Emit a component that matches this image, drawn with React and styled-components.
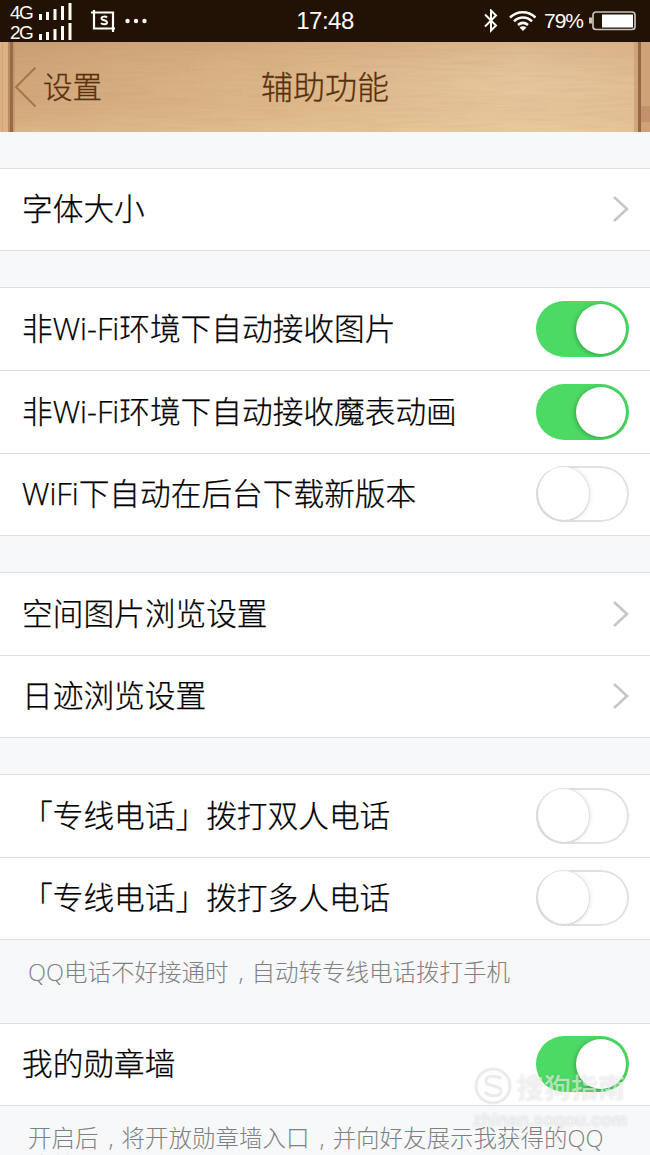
import React from "react";
import styled, { createGlobalStyle } from "styled-components";

const Global = createGlobalStyle`
  body { margin: 0; background: #f7f8fa; }
  * { box-sizing: border-box; }
`;

const Screen = styled.main`
  width: 650px;
  height: 1155px;
  overflow: hidden;
  position: relative;
  background: #f7f8fa;
  font-family: "Open Sans", "Noto Sans CJK SC", sans-serif;
  font-weight: 300;
`;

const StatusBar = styled.header`
  height: 42px;
  display: grid;
  grid-template-columns: 1fr auto 1fr;
  align-items: center;
  background: #221206;
  color: #fffdf5;
  font-family: "Liberation Sans", sans-serif;
  font-weight: 400;
`;

const StatusGroup = styled.div`
  display: flex;
  align-items: center;
  justify-content: ${(p) => (p.$end ? "flex-end" : "flex-start")};
  padding: ${(p) => (p.$end ? "0 14px 0 0" : "0 0 0 10px")};
`;

const Networks = styled.div`
  display: grid;
  gap: 1px;
  margin-right: 19px;
  padding-top: 2px;
`;

const Network = styled.div`
  display: flex;
  align-items: flex-start;
  justify-content: space-between;
  width: 62px;
  height: 19px;
  font-size: 19px;
  line-height: 20px;
  letter-spacing: -1.5px;
`;

const Clock = styled.time`
  font-size: 24px;
  line-height: 42px;
  letter-spacing: -0.5px;
`;

const Percent = styled.span`
  font-size: 21px;
  line-height: 42px;
  letter-spacing: -1px;
  margin: 0 6px 0 8px;
`;

const NavBar = styled.nav`
  position: relative;
  height: 90px;
  display: grid;
  grid-template-columns: 1fr auto 1fr;
  align-items: center;
  background: #dbb487;
  color: #57300f;
`;

const Wood = styled.svg`
  position: absolute;
  inset: 0;
  display: block;
`;

const Back = styled.div`
  position: relative;
  display: flex;
  align-items: center;
  gap: 6px;
  padding-left: 14px;
  font-size: 29.5px;
  line-height: 90px;
  -webkit-text-stroke: 0.3px currentColor;
`;

const Title = styled.h1`
  position: relative;
  margin: 0;
  font-size: 32px;
  font-weight: 300;
  line-height: 88px;
  padding-bottom: 1px;
  -webkit-text-stroke: 0.3px currentColor;
`;

const Group = styled.section`
  margin-top: ${(p) => (p.$flush ? 0 : 36)}px;
  border-top: 1px solid #dedfe0;
  background: #fff;
`;

const Row = styled.div`
  height: 83px;
  display: flex;
  align-items: center;
  justify-content: space-between;
  padding: 0 21px 1px 22px;
  border-bottom: 1px solid #dedfe0;
  color: #000;
  font-size: 30.7px;
  white-space: nowrap;
  &:last-child { height: 82px; }
`;

const Label = styled.span`
  line-height: 44px;
  padding-bottom: 2px;
  -webkit-text-stroke: 0.25px currentColor;
`;

const Track = styled.span`
  width: 93px;
  height: 56px;
  display: flex;
  justify-content: ${(p) => (p.$on ? "flex-end" : "flex-start")};
  padding: ${(p) => (p.$on ? "3px" : "0")};
  border-radius: 28px;
  background: ${(p) => (p.$on ? "#4cd964" : "#fff")};
  box-shadow: ${(p) => (p.$on ? "none" : "inset 0 0 0 2px #e2e2e2")};
  overflow: hidden;
`;

const Knob = styled.span`
  width: ${(p) => (p.$on ? 50 : 54)}px;
  height: ${(p) => (p.$on ? 50 : 56)}px;
  border-radius: 50%;
  background: #fff;
  box-shadow: ${(p) => (p.$on ? "-1px 1px 4px rgba(0,60,10,.35)" : "inset 1px -1px 1px 1px #d8d8d8, inset 0 0 0 1px #e4e4e4, 1px 0 4px rgba(0,0,0,.08)")};
`;

const Hint = styled.p`
  margin: 0;
  padding: 18px 28px 0;
  height: ${(p) => (p.$short ? 74 : 83)}px;
  color: #808080;
  font-size: 23.5px;
  line-height: 28px;
  white-space: nowrap;
`;

const Comma = styled.span`
  padding: 0 8px 0 10px;
`;

const Watermark = styled.div`
  position: absolute;
  left: 473px;
  top: 1064px;
  width: 170px;
  color: rgba(255, 255, 255, 0.6);
  text-shadow: 0 0 2px rgba(0, 0, 0, 0.16);
  font-family: "Liberation Sans", "Noto Sans CJK SC", sans-serif;
  font-weight: 700;
`;

const Brand = styled.div`
  display: flex;
  align-items: center;
  gap: 4px;
  height: 44px;
  font-size: 27px;
  font-weight: 500;
`;

const Site = styled.div`
  font-size: 17.6px;
  line-height: 24px;
`;

const Bars = () => (
  <svg width="33" height="17" viewBox="0 0 33 17" fill="#fffdf5">
    <path d="M0 11h3v6H0zM7 9h3v8H7zM14.500 6h3v11h-3zM22 3h3v14h-3zM29.500 0h3v17h-3z" />
  </svg>
);

const Chevron = () => (
  <svg width="17" height="28" viewBox="0 0 17 28" fill="none" stroke="#c6c6c8" strokeWidth="2.600">
    <path d="M2 2l13 12L2 26" />
  </svg>
);

const Switch = ({ on }) => (
  <Track $on={on} role="switch" aria-checked={!!on}><Knob $on={on} /></Track>
);

const WoodPanel = () => (
  <Wood width="650" height="90" viewBox="0 0 650 90" preserveAspectRatio="none">
    <defs>
      <linearGradient id="base" x1="0" y1="0" x2="1" y2="0">
        <stop offset="0" stopColor="#d0a67a" />
        <stop offset=".5" stopColor="#dfbb8e" />
        <stop offset=".8" stopColor="#e8c99f" />
        <stop offset="1" stopColor="#e3c096" />
      </linearGradient>
      <linearGradient id="fall" x1="0" y1="0" x2="0" y2="1">
        <stop offset="0" stopColor="#b8845f" stopOpacity=".26" />
        <stop offset=".5" stopColor="#d2a376" stopOpacity=".05" />
        <stop offset="1" stopColor="#ecd09c" stopOpacity=".35" />
      </linearGradient>
      <filter id="grain" x="0" y="0" width="100%" height="100%">
        <feTurbulence type="fractalNoise" baseFrequency=".02 .3" numOctaves="3" seed="8" />
        <feColorMatrix values="0 0 0 0 .45  0 0 0 0 .26  0 0 0 0 .14  .7 0 0 0 -.25" />
      </filter>
    </defs>
    <rect width="650" height="90" fill="url(#base)" />
    <rect width="650" height="90" fill="url(#fall)" />
    <rect width="650" height="90" filter="url(#grain)" opacity=".36" />
    <rect width="8" height="90" fill="#dcb184" />
    <rect x="2" width="1" height="90" fill="#c99a6d" opacity=".6" />
    <rect x="8" width="2" height="90" fill="#bb8a60" />
    <rect x="10" width="3" height="90" fill="#986a48" />
    <rect x="13" width="2" height="90" fill="#bd8a60" opacity=".5" />
    <rect x="634" width="4" height="90" fill="#c5976b" opacity=".6" />
    <rect x="638" width="3" height="90" fill="#966645" />
    <rect x="641" width="9" height="90" fill="#cfa278" />
    <rect x="641" y="64" width="9" height="16" fill="#a97850" opacity=".35" />
  </Wood>
);

export default function App() {
  return (
    <Screen>
      <Global />
      <StatusBar>
        <StatusGroup>
          <Networks>
            <Network>4G <Bars /></Network>
            <Network>2G <Bars /></Network>
          </Networks>
          <svg width="60" height="24" viewBox="0 0 60 24" fill="none" stroke="#fffdf5" strokeWidth="2.200">
            <path d="M0 3.500h22v16M3 1v18.500h21M22 20v3" />
            <path d="M16 8.500c-1-1.200-5.500-1.400-5.500.8 0 2.600 5.500 1.400 5.500 4.200 0 2.200-4.600 2.200-6 .6" strokeWidth="2" />
            <g fill="#fffdf5" stroke="none"><circle cx="36.500" cy="12" r="2.200" /><circle cx="45" cy="12" r="2.200" /><circle cx="53.500" cy="12" r="2.200" /></g>
          </svg>
        </StatusGroup>
        <Clock>17:48</Clock>
        <StatusGroup $end>
          <svg width="52" height="24" viewBox="0 0 52 24" fill="none" stroke="#fffdf5" strokeWidth="2">
            <path d="M1 5.500l11 11L7 21.500v-20l5 5-11 11" />
            <path d="M26 8.500c7.300-7 18.200-7 25.500 0M30 12.300c5.400-5 12.600-5 18 0M34 16c3.500-3 6.500-3 10 0" strokeWidth="2.500" />
            <path d="M35.500 18.500q3.500-2.600 7 0L39 22z" fill="#fffdf5" stroke="none" />
          </svg>
          <Percent>79%</Percent>
          <svg width="47" height="20" viewBox="0 0 47 20">
            <rect x="4" y="1" width="42" height="17.500" rx="3" fill="none" stroke="#c9c3bb" strokeWidth="1.700" />
            <path d="M0 6.500h3v6H0z" fill="#c9c3bb" />
            <rect x="13" y="3.500" width="31" height="13" fill="#fff" />
          </svg>
        </StatusGroup>
      </StatusBar>
      <NavBar>
        <WoodPanel />
        <Back>
          <svg width="23" height="42" viewBox="0 0 23 42" fill="none" stroke="#a67549" strokeWidth="2">
            <path d="M21.500 1.500L2 21l19.500 19.500" />
          </svg>
          设置
        </Back>
        <Title>辅助功能</Title>
      </NavBar>
      <Group>
        <Row><Label>字体大小</Label><Chevron /></Row>
      </Group>
      <Group>
        <Row><Label>非Wi-Fi环境下自动接收图片</Label><Switch on /></Row>
        <Row><Label>非Wi-Fi环境下自动接收魔表动画</Label><Switch on /></Row>
        <Row><Label>WiFi下自动在后台下载新版本</Label><Switch /></Row>
      </Group>
      <Group>
        <Row><Label>空间图片浏览设置</Label><Chevron /></Row>
        <Row><Label>日迹浏览设置</Label><Chevron /></Row>
      </Group>
      <Group>
        <Row><Label>「专线电话」拨打双人电话</Label><Switch /></Row>
        <Row><Label>「专线电话」拨打多人电话</Label><Switch /></Row>
      </Group>
      <Hint>QQ电话不好接通时<Comma>,</Comma>自动转专线电话拨打手机</Hint>
      <Group $flush>
        <Row><Label>我的勋章墙</Label><Switch on /></Row>
      </Group>
      <Hint $short>开启后<Comma>,</Comma>将开放勋章墙入口<Comma>,</Comma>并向好友展示我获得的QQ<br />成就。</Hint>
      <Watermark>
        <Brand>
          <svg width="40" height="40" viewBox="0 0 40 40" fill="none" stroke="rgba(190,190,190,.3)" strokeWidth="3">
            <circle cx="20" cy="20" r="17" />
            <path d="M28 13c-4-4-15-4-15 2 0 7 15 3 15 10 0 6-12 6-16 1" />
          </svg>
          搜狗指南
        </Brand>
        <Site>zhinan.sogou.com</Site>
      </Watermark>
    </Screen>
  );
}
